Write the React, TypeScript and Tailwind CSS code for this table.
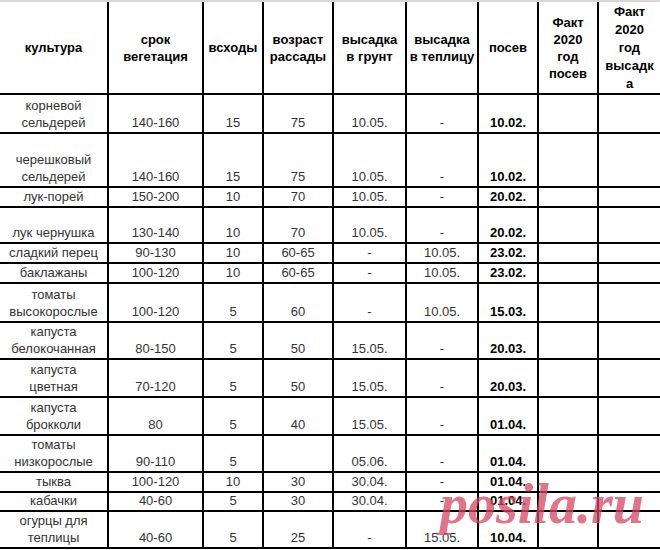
const GRID = 'grid grid-cols-[109px_95px_60px_70px_73px_72px_60px_60px_61px]';

type Row = {
  h: string;
  name: string[];
  veg: string;
  sprout: string;
  age: string;
  ground: string;
  green: string;
  sow: string;
};

const ROWS: Row[] = [
  { h: 'h-[39px]', name: ['корневой', 'сельдерей'], veg: '140-160', sprout: '15', age: '75', ground: '10.05.', green: '-', sow: '10.02.' },
  { h: 'h-[54px]', name: ['черешковый', 'сельдерей'], veg: '140-160', sprout: '15', age: '75', ground: '10.05.', green: '-', sow: '10.02.' },
  { h: 'h-[20px]', name: ['лук-порей'], veg: '150-200', sprout: '10', age: '70', ground: '10.05.', green: '-', sow: '20.02.' },
  { h: 'h-[36px]', name: ['лук чернушка'], veg: '130-140', sprout: '10', age: '70', ground: '10.05.', green: '-', sow: '20.02.' },
  { h: 'h-[20px]', name: ['сладкий перец'], veg: '90-130', sprout: '10', age: '60-65', ground: '-', green: '10.05.', sow: '23.02.' },
  { h: 'h-[20px]', name: ['баклажаны'], veg: '100-120', sprout: '10', age: '60-65', ground: '-', green: '10.05.', sow: '23.02.' },
  { h: 'h-[39px]', name: ['томаты', 'высокорослые'], veg: '100-120', sprout: '5', age: '60', ground: '-', green: '10.05.', sow: '15.03.' },
  { h: 'h-[37px]', name: ['капуста', 'белокочанная'], veg: '80-150', sprout: '5', age: '50', ground: '15.05.', green: '-', sow: '20.03.' },
  { h: 'h-[38px]', name: ['капуста', 'цветная'], veg: '70-120', sprout: '5', age: '50', ground: '15.05.', green: '-', sow: '20.03.' },
  { h: 'h-[38px]', name: ['капуста', 'брокколи'], veg: '80', sprout: '5', age: '40', ground: '15.05.', green: '-', sow: '01.04.' },
  { h: 'h-[37px]', name: ['томаты', 'низкорослые'], veg: '90-110', sprout: '5', age: '', ground: '05.06.', green: '-', sow: '01.04.' },
  { h: 'h-[19px]', name: ['тыква'], veg: '100-120', sprout: '10', age: '30', ground: '30.04.', green: '-', sow: '01.04.' },
  { h: 'h-[18px]', name: ['кабачки'], veg: '40-60', sprout: '5', age: '30', ground: '30.04.', green: '-', sow: '01.04.' },
  { h: 'h-[39px]', name: ['огурцы для', 'теплицы'], veg: '40-60', sprout: '5', age: '25', ground: '-', green: '15.05.', sow: '10.04.' },
];

const HEAD: string[][] = [
  ['культура'],
  ['срок', 'вегетация'],
  ['всходы'],
  ['возраст', 'рассады'],
  ['высадка', 'в грунт'],
  ['высадка', 'в теплицу'],
  ['посев'],
  ['Факт', '2020', 'год', 'посев'],
  ['Факт', '2020', 'год', 'высадк', 'а'],
];

function Lines({ lines }: { lines: string[] }) {
  return (
    <span>
      {lines.map((l, i) => (
        <span key={i} className="block whitespace-nowrap">
          {l}
        </span>
      ))}
    </span>
  );
}

function Cell({ children, last, bold }: { children?: React.ReactNode; last?: boolean; bold?: boolean }) {
  return (
    <div
      className={`flex items-end justify-center pb-px text-center border-b-2 border-black ${last ? '' : 'border-r-2'} ${
        bold ? 'font-bold text-black' : 'text-[#333]'
      }`}
    >
      {children}
    </div>
  );
}

export default function App() {
  return (
    <div className="relative w-[660px] h-[550px] overflow-hidden bg-white font-['Liberation_Sans',Arial,sans-serif] text-[13px] leading-[17px]">
      <div className="h-[2px] bg-[#d6d6d6]" />

      {/* header */}
      <div className={`${GRID} h-[93px]`}>
        {HEAD.map((lines, i) => (
          <div
            key={i}
            className={`flex items-center justify-center text-center font-bold text-black border-b-2 border-black ${
              i === HEAD.length - 1 ? 'leading-[18px] pt-px' : 'border-r-2'
            }`}
          >
            <Lines lines={lines} />
          </div>
        ))}
      </div>

      {/* rows */}
      {ROWS.map((r, i) => (
        <div key={i} className={`${GRID} ${r.h}`}>
          <Cell>
            <Lines lines={r.name} />
          </Cell>
          <Cell>{r.veg}</Cell>
          <Cell>{r.sprout}</Cell>
          <Cell>{r.age}</Cell>
          <Cell>{r.ground}</Cell>
          <Cell>{r.green}</Cell>
          <Cell bold>{r.sow}</Cell>
          <Cell />
          <Cell last />
        </div>
      ))}

      {/* watermark */}
      <span className="absolute left-[440px] top-[476px] font-['Liberation_Serif',serif] text-[56px] leading-none font-bold italic text-[rgba(214,70,98,0.75)] pointer-events-none">
        posila.ru
      </span>
    </div>
  );
}
